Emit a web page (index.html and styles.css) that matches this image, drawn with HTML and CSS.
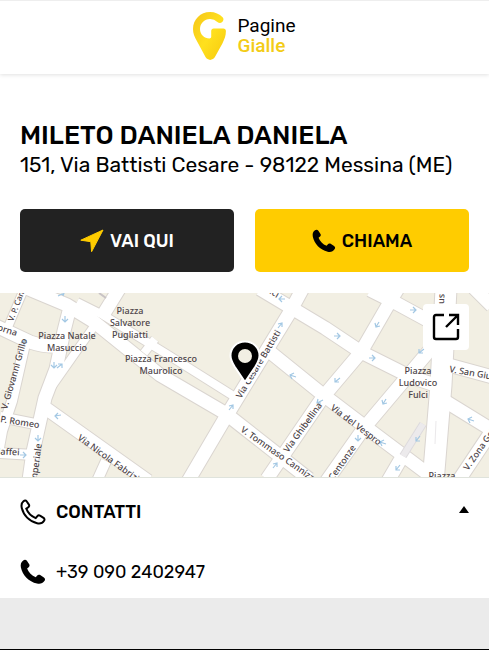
FILE: index.html
```html
<!DOCTYPE html>
<html lang="it">
<head>
<meta charset="utf-8">
<meta name="viewport" content="width=device-width, initial-scale=1">
<title>Mileto Daniela Daniela - Pagine Gialle</title>
<link rel="stylesheet" href="styles.css">
</head>
<body>
<svg width="0" height="0" class="defs" aria-hidden="true">
  <symbol id="phone" viewBox="0 0 26 26">
    <path d="M3.2 1.4C4.4.6 6 .6 6.9 1.8l2.3 3.5c.7 1.1.3 2.5-.8 3.2L7.100 9.500c1.500 4 4.600 7 8.700 8.700l1.200-1.500c.8-1 2.200-1.200 3.200-.6l3.700 2.300c1.200.8 1.500 2.300.7 3.400-1.700 2.700-4.500 3.500-7.600 2.800C8.700 22.700 2.500 16.200.9 8.500.4 5.600.800 3 3.200 1.400z"/>
  </symbol>
</svg>
<header class="header">
  <a class="logo" href="#">
    <svg class="logo-mark" viewBox="0 0 34 48" aria-hidden="true">
      <defs><linearGradient id="gold" x1="0" y1="0" x2="1" y2="1"><stop offset="0" stop-color="#f5c518"/><stop offset=".5" stop-color="#ffe01e"/><stop offset="1" stop-color="#f6c90e"/></linearGradient></defs>
      <path fill="url(#gold)" d="M17 0c5 0 9.500 2 12.600 5.200 1.500 1.600.8 3.600-.4 4.800-1.500 1.400-3.400 1.200-4.800-.1A10.500 10.500 0 0 0 17 7C11.300 7 7 11.500 7 17c0 5.600 4.400 9.400 9.400 9.400 1 0 1.800-.6 1.800-1.600V19c0-1.600 1-2.500 2.500-2.500h9.600c1.600 0 2.600 1 2.600 2.600 0 4.800-1.400 8.300-3.500 12.300l-7.500 13.700c-2 3.700-7.400 3.700-9.400 0L3.600 28.500C1.500 24.800 0 21.400 0 17 0 7.500 7.500 0 17 0z"/>
    </svg>
    <span class="logo-text"><span>Pagine</span><span class="gialle">Gialle</span></span>
  </a>
</header>
<main>
  <section class="intro">
    <h1>MILETO DANIELA DANIELA</h1>
    <p class="address">151, Via Battisti Cesare - 98122 Messina (ME)</p>
    <div class="actions">
      <button class="btn dark" type="button">
        <svg class="btn-icon" viewBox="0 0 24 24" aria-hidden="true"><path fill="#fc0" stroke="#fc0" stroke-linejoin="round" d="M23 1 .8 11.200l10 1.500.8 10z"/></svg>
        VAI QUI
      </button>
      <button class="btn yellow" type="button">
        <svg class="btn-icon" aria-hidden="true"><use href="#phone"/></svg>
        CHIAMA
      </button>
    </div>
  </section>
  <section class="map" aria-label="Mappa">
    <svg class="streets" viewBox="0 0 489 184" preserveAspectRatio="xMidYMid slice">
      <defs>
        <g id="roads" fill="none" stroke-linejoin="round">
          <path class="w8" d="M24-4 8 34M77 9l26 13 62 38 70 44M155 46l-11 14M97 29 50 96"/>
          <path class="w10" d="M0 124l40 8M0 160l34 2M106 168l-9 20M27 42 12 108 2 138-2 160"/>
          <path class="w12" d="M-4 33 30 49q15 5 30 4M24-6l43 18 26 16 67 54 65 38 84 66M71 10 64 38 56 76 45 105 33 159l-4 28M44 114l104 74M119-4l-16 26M303-5 290 19 227 122l-40 68M260-4l65 39 36 24 50 25 30 10M270 59l52 42 54 41 64 48M400-8l-9 15-30 52-38 45-56 82M370-3l24 12 46 25M434 52l-70 83-38 54M402 164l-14 24"/>
          <path class="w12" d="M445 71l48 13M440 105l52 32M491 139l-32 48M474-5l18 18"/>
          <path class="w20" d="M446-4 441 92l-8 98"/>
        </g>
      </defs>
      <rect width="489" height="184" fill="#f2efe3"/>
      <use href="#roads" class="casing"/>
      <use href="#roads" class="surface"/>
      <path d="M423 131l-20 32" stroke="#dddadd" stroke-width="8"/>
      <path d="M423 131l-20 32" stroke="#eceaec" stroke-width="6"/>
      <path d="M436 128l-1 23" stroke="#ebe9eb"/><path d="M99 0l7 5" stroke="#c8c3c5" stroke-width="2"/>
      <g fill="none" stroke="#a3c8e4" stroke-width="1.200">
        <path transform="translate(61 2)" d="M-3 1 3-2M0-3l3 1-1 3"/>
        <path d="M65 23v6m-3-3 3 3 3-3M24 53v-6m-3 3 3-3 3 3M54 69v6m-3-3 3 3 3-3M57 75l5-4m-4 0h4v4M61 122l-6 1m3-3-3 3 3 3M38 142v6m-3-3 3 3 3-3M20 162h6m-3-3 3 3-3 3"/>
        <path d="M285 6l-6 0m3-3-3 3 3 3M278 35l4-5m-4 1 4-1v4M296 84l-6-2m4-2-4 2 2 4M229 117l4-5m-4 1 4-1v4M323 107l-6 3m1-4-1 4h4M273 175l4-5m-4 1 4-1v4"/>
        <path d="M410 17h6m-3-3 3 3-3 3M379 29l-3 5m-1-4 1 4 4-1M334 43h6m-3-3 3 3-3 3M369 65h6m-3-3 3 3-3 3M424 56l-5 4m0-4v4h4M340 85l-5 4m0-4v4h4M386 106l-3 5m-1-4 1 4 4-1M358 142v6m-3-3 3 3 3-3M386 151l-6-2m4-2-4 2 2 4M420 143l-4 5m0-4v4h4M474 128l-6-2m4-2-4 2 2 4M400 172l-4 5m0-4v4h4"/>
      </g>
      <g class="place">
        <text x="130" y="21">Piazza</text><text x="130" y="33">Salvatore</text><text x="130" y="45">Pugliatti</text>
        <text x="67" y="46">Piazza Natale</text><text x="67" y="58">Masuccio</text>
        <text x="161" y="69">Piazza Francesco</text><text x="161" y="81">Maurolico</text>
        <text x="418" y="81">Piazza</text><text x="418" y="93">Ludovico</text><text x="418" y="105">Fulci</text>
        <text x="442" y="186">Piazza</text>
      </g>
      <g class="street">
        <text transform="translate(13 29) rotate(-69)" class="small">V. P. Canicci</text>
        <text transform="translate(-3 37) rotate(18)">orna</text>
        <text transform="translate(7 117) rotate(-74)">V. Giovanni Grillo</text>
        <text transform="translate(0 129) rotate(9)">P. Romeo</text>
        <text transform="translate(-8 161) rotate(3)">Maffei</text>
        <text transform="translate(36 192) rotate(-82)">Imperiale</text>
        <text transform="translate(77 146) rotate(36)">Via Nicola Fabrizi</text>
        <text transform="translate(241 106) rotate(-59)">Via Cesare Battisti</text>
        <text transform="translate(240 138) rotate(35)">V. Tommaso Cannizzaro</text>
        <text transform="translate(288 160) rotate(-54)">Via Ghibellina</text>
        <text transform="translate(330 116) rotate(37)">Via del Vespro</text>
        <text transform="translate(333 188) rotate(-55)">Centonze</text>
        <text transform="translate(449 79) rotate(10)">V. San Giuliano</text>
        <text transform="translate(468 178) rotate(-55)">V. Zona Goito</text>
        <text transform="translate(444 11) rotate(-88)">us</text>
        <text transform="translate(269 0) rotate(32)">ici</text>
      </g>
    </svg>
    <svg class="pin" viewBox="0 0 32 44" aria-hidden="true"><path fill="#000" stroke="#fff" stroke-width="2" d="M16 1.500C8 1.500 1.500 7.600 1.500 15.500c0 4 1.800 7.500 4.200 11.300L16 42l10.300-15.200c2.400-3.800 4.200-7.300 4.200-11.300 0-7.900-6.500-14-14.500-14z"/><circle cx="16" cy="16" r="7" fill="#f2efe3"/></svg>
    <button class="open" type="button" aria-label="Apri la mappa">
      <svg viewBox="0 0 28 28" fill="none" stroke="#000" stroke-width="2.400" aria-hidden="true"><path d="M12 2H4Q2 2 2 4v20q0 2 2 2h20q2 0 2-2v-8M14 14 26 2M17 2h9v10"/></svg>
    </button>
  </section>
  <section class="contacts">
    <h2><button class="row toggle" type="button" aria-expanded="true">
      <svg class="outline" viewBox="0 0 26 26" aria-hidden="true"><path d="M3.500 2.200C4.600 1.300 5.900 1.300 6.600 2.300l2.300 3.300c.6.9.3 2-.6 2.600L6.300 9.700c1.600 4.200 5 7.700 9.400 9.400l1.700-2c.7-.8 1.700-1 2.600-.4l3.500 2.200c1 .7 1.300 1.900.6 2.800-1.700 2.600-4.200 3.100-7 2.500C9.500 22.600 3.300 16.200 1.700 8.500 1.200 6 1.500 3.800 3.500 2.200z"/></svg>
      <span>CONTATTI</span>
      <svg class="caret" viewBox="0 0 10 7" aria-hidden="true"><path d="M5 0l5 7H0z"/></svg>
    </button></h2>
    <a class="row number" href="tel:+390902402947"><svg class="solid" aria-hidden="true"><use href="#phone"/></svg><span>+39 090 2402947</span></a>
  </section>
</main>
<footer class="footer"></footer>
</body>
</html>
```

FILE: styles.css
```css
* { box-sizing: border-box; }
body {
  margin: 0;
  min-height: 100vh;
  display: flex;
  flex-direction: column;
  background: #fff;
  color: #000;
  font-family: Rubik, Roboto, "Liberation Sans", sans-serif;
}
button { font: inherit; color: inherit; border: 0; cursor: pointer; }
a { color: inherit; text-decoration: none; }
.defs { position: absolute; }
.header {
  display: flex;
  justify-content: center;
  padding: 11px 0 14px;
  border-top: 1px solid #eee;
  box-shadow: 0 1px 4px rgba(0, 0, 0, .12);
}
.logo { display: flex; align-items: center; gap: 10px; }
.logo-mark { width: 34px; height: 48px; }
.logo-text {
  display: flex;
  flex-direction: column;
  font-family: Roboto, sans-serif;
  font-size: 19px;
  line-height: 20px;
}
.gialle { color: #f3cc17; font-weight: 500; }
.intro { padding: 46px 20px 21px; }
h1 { margin: 0; font-size: 26px; line-height: 32px; font-weight: 500; }
.address { margin: 0; font-size: 21px; line-height: 26px; }
.actions {
  display: grid;
  grid-template-columns: 1fr 1fr;
  gap: 21px;
  margin-top: 31px;
}
.btn {
  display: flex;
  align-items: center;
  justify-content: center;
  gap: 6px;
  height: 63px;
  padding: 0;
  border-radius: 5px;
  font-size: 18px;
  font-weight: 500;
}
.btn-icon { width: 24px; height: 24px; }
.dark { background: #222; color: #fff; }
.yellow { background: #fc0; }
.map {
  position: relative;
  height: 185px;
  border-bottom: 1px solid #dfe3dc;
  overflow: hidden;
}
.streets { display: block; width: 100%; height: 100%; }
.w8 { stroke-width: calc(8px + var(--edge)); }
.w10 { stroke-width: calc(10px + var(--edge)); }
.w12 { stroke-width: calc(13px + var(--edge)); }
.w20 { stroke-width: calc(21px + var(--edge)); }
.casing { --edge: 2px; stroke: #dad5d0; }
.surface { --edge: 0px; stroke: #fff; }
.place, .street {
  font-family: "Noto Sans", sans-serif;
  font-size: 9px;
  font-weight: 500;
  fill: #4d4448;
}
.place { text-anchor: middle; }
.small { font-size: 8px; }
.pin {
  position: absolute;
  left: 50%;
  top: 47px;
  width: 32px;
  height: 44px;
  margin-left: -16px;
}
.open {
  position: absolute;
  top: 11px;
  right: 20px;
  width: 46px;
  height: 46px;
  padding: 9px;
  border-radius: 4px;
  background: #fff;
}
.open svg { display: block; width: 28px; height: 28px; }
.contacts { padding: 4px 20px 0; }
h2 { margin: 0; font-size: 18px; font-weight: 500; }
.row {
  display: flex;
  align-items: center;
  gap: 10px;
  width: 100%;
  height: 60px;
  padding: 0;
  background: none;
}
.number { height: 56px; padding-top: 4px; font-size: 18px; }
.outline, .solid { width: 26px; height: 26px; }
.outline { fill: none; stroke: #000; stroke-width: 2px; }
.caret { width: 10px; height: 7px; margin-left: auto; margin-bottom: 6px; }
.footer { flex: 1; background: #ebebeb; border-bottom: 1px solid #000; }
```
